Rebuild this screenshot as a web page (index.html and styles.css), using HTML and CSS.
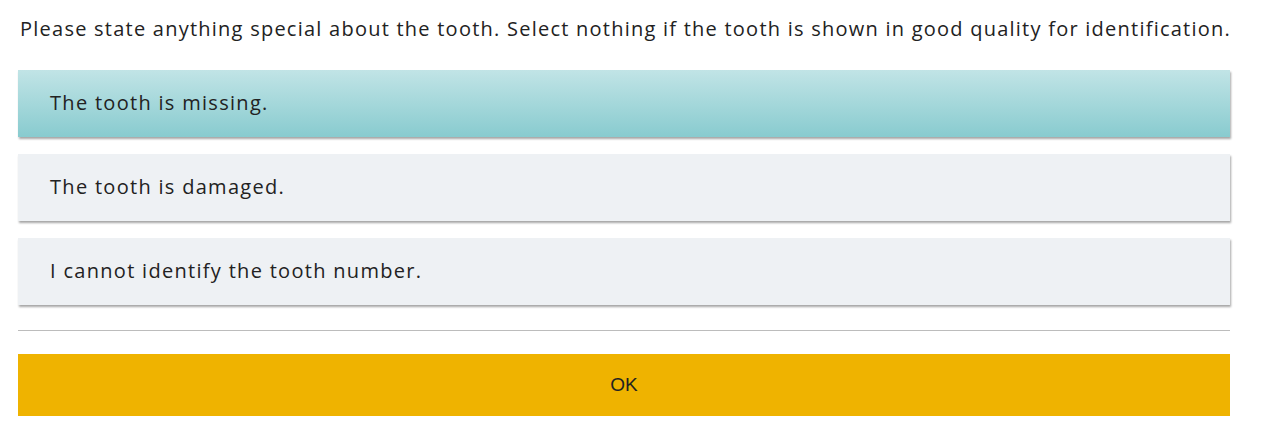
FILE: index.html
```html
<!DOCTYPE html>
<html>
<head>
<meta charset="utf-8">
<link rel="stylesheet" href="styles.css">
</head>
<body>
<div class="panel">
  <p class="prompt">Please state anything special about the tooth. Select nothing if the tooth is shown in good quality for identification.</p>
  <div class="options">
    <div class="option selected">The tooth is missing.</div>
    <div class="option">The tooth is damaged.</div>
    <div class="option">I cannot identify the tooth number.</div>
  </div>
  <hr class="divider">
  <button class="ok">OK</button>
</div>
</body>
</html>
```

FILE: styles.css
```css
html, body {
  margin: 0;
  padding: 0;
  background: #ffffff;
}
.panel {
  width: 1212px;
  padding: 16px 0 0 18px;
  font-family: "Open Sans", sans-serif;
  color: #222;
}
.prompt {
  margin: 0 0 0 2px;
  font-size: 20px;
  letter-spacing: 1.24px;
  line-height: 26px;
  white-space: nowrap;
}
.options {
  margin-top: 28px;
  display: flex;
  flex-direction: column;
  gap: 17px;
}
.option {
  height: 67px;
  display: flex;
  align-items: center;
  padding-left: 32px;
  padding-bottom: 2px;
  box-sizing: border-box;
  font-size: 20px;
  letter-spacing: 1.3px;
  background: #eef1f4;
  box-shadow: 1px 2px 2px rgba(0, 0, 0, 0.35);
}
.option.selected {
  background: linear-gradient(to bottom, #c1e4e6, #88cbcf);
}
.divider {
  margin: 25px 0 0 0;
  border: 0;
  border-top: 1px solid #bcbcbc;
  height: 0;
}
.ok {
  display: block;
  margin-top: 23px;
  width: 100%;
  height: 62px;
  border: 0;
  background: #efb300;
  font-family: "Liberation Sans", Arial, sans-serif;
  font-size: 19px;
  color: #222;
}
```
